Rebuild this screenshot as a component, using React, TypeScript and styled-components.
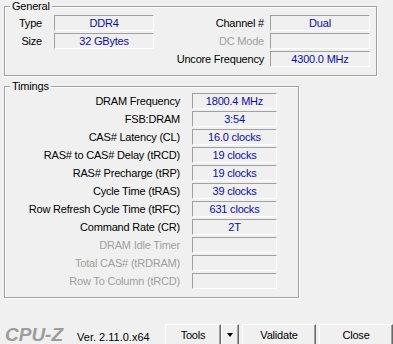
import React from 'react';
import styled, { createGlobalStyle } from 'styled-components';

type Row = { label: string; value?: string; disabled?: boolean };

const GENERAL: [Row | null, Row][] = [
  [{ label: 'Type', value: 'DDR4' }, { label: 'Channel #', value: 'Dual' }],
  [{ label: 'Size', value: '32 GBytes' }, { label: 'DC Mode', disabled: true }],
  [null, { label: 'Uncore Frequency', value: '4300.0 MHz' }],
];

const TIMINGS: Row[] = [
  { label: 'DRAM Frequency', value: '1800.4 MHz' },
  { label: 'FSB:DRAM', value: '3:54' },
  { label: 'CAS# Latency (CL)', value: '16.0 clocks' },
  { label: 'RAS# to CAS# Delay (tRCD)', value: '19 clocks' },
  { label: 'RAS# Precharge (tRP)', value: '19 clocks' },
  { label: 'Cycle Time (tRAS)', value: '39 clocks' },
  { label: 'Row Refresh Cycle Time (tRFC)', value: '631 clocks' },
  { label: 'Command Rate (CR)', value: '2T' },
  { label: 'DRAM Idle Timer', disabled: true },
  { label: 'Total CAS# (tRDRAM)', disabled: true },
  { label: 'Row To Column (tRCD)', disabled: true },
];

const App = (): JSX.Element => {
  return (
    <>
      <GlobalStyle />
      <Window>
        <Group $width={373} $top={6}>
          <Caption>General</Caption>
          <GeneralGrid>
            {GENERAL.map(([left, right], i) => (
              <React.Fragment key={i}>
                {left ? (
                  <>
                    <Label $gap={12}>{left.label}</Label>
                    <Field>{left.value}</Field>
                  </>
                ) : (
                  <>
                    <span />
                    <span />
                  </>
                )}
                <Label $gap={6} $disabled={right.disabled}>
                  {right.label}
                </Label>
                <Field>{right.value}</Field>
              </React.Fragment>
            ))}
          </GeneralGrid>
        </Group>

        <Group $width={295} $top={10}>
          <Caption>Timings</Caption>
          <TimingsGrid>
            {TIMINGS.map((row) => (
              <React.Fragment key={row.label}>
                <Label $gap={12} $disabled={row.disabled}>
                  {row.label}
                </Label>
                <Field>{row.value}</Field>
              </React.Fragment>
            ))}
          </TimingsGrid>
        </Group>

        <Footer>
          <Brand>
            <Logo>CPU-Z</Logo>
            <Version>Ver. 2.11.0.x64</Version>
          </Brand>
          <Buttons>
            <SplitButton>
              <Button $width={56}>Tools</Button>
              <Button $width={18}>
                <Arrow />
              </Button>
            </SplitButton>
            <Button $width={74}>Validate</Button>
            <Button $width={74}>Close</Button>
          </Buttons>
        </Footer>
      </Window>
    </>
  );
};

export default App;

const GlobalStyle = createGlobalStyle`
  html, body {
    margin: 0;
    padding: 0;
    background: #f0f0f0;
  }
  body {
    font-family: "Liberation Sans", Arial, sans-serif;
    font-size: 11px;
    letter-spacing: -0.2px;
    color: #000;
  }
`;

const Window = styled.div`
  width: 393px;
  height: 344px;
  overflow: hidden;
  box-sizing: border-box;
  padding-left: 4px;
  display: flex;
  flex-direction: column;
  background: #f0f0f0;
`;

const Group = styled.section<{ $width: number; $top: number }>`
  position: relative;
  flex: none;
  width: ${({ $width }) => $width}px;
  margin-top: ${({ $top }) => $top}px;
  box-sizing: border-box;
  border: 1px solid #a0a0a0;
  box-shadow: inset 1px 1px 0 #fff, 1px 1px 0 #fff;
`;

const Caption = styled.span`
  position: absolute;
  top: -7px;
  left: 5px;
  padding: 0 2px;
  line-height: 13px;
  background: #f0f0f0;
`;

const GeneralGrid = styled.div`
  display: grid;
  grid-template-columns: 49px 100px 116px 100px;
  grid-auto-rows: 16px;
  row-gap: 2px;
  padding: 8px 0 8px;
`;

const TimingsGrid = styled.div`
  display: grid;
  grid-template-columns: 187px 85px;
  grid-auto-rows: 16px;
  row-gap: 2px;
  padding: 6px 0 8px;
`;

const Label = styled.span<{ $gap: number; $disabled?: boolean }>`
  padding-right: ${({ $gap }) => $gap}px;
  line-height: 16px;
  text-align: right;
  white-space: nowrap;
  color: ${({ $disabled }) => ($disabled ? '#a0a0a0' : '#000')};
`;

const Field = styled.span`
  box-sizing: border-box;
  height: 16px;
  border-top: 1px solid #a0a0a0;
  border-left: 1px solid #a0a0a0;
  border-right: 1px solid #fff;
  border-bottom: 1px solid #fff;
  line-height: 14px;
  text-align: center;
  color: #0c0ca8;
  white-space: nowrap;
`;

const Footer = styled.div`
  display: flex;
  align-items: flex-start;
  margin-top: 26px;
`;

const Brand = styled.div`
  display: flex;
  align-items: baseline;
  margin: 3px 0 0 1px;
`;

const Logo = styled.span`
  font-size: 19px;
  line-height: 16px;
  font-weight: 700;
  font-style: italic;
  letter-spacing: 0;
  color: #9c9c9c;
  margin-right: 14px;
`;

const Version = styled.span`
  font-size: 11px;
  line-height: 13px;
  letter-spacing: 0;
`;

const Buttons = styled.div`
  display: flex;
  gap: 3px;
  margin-left: auto;
`;

const SplitButton = styled.div`
  display: flex;
`;

const Button = styled.div<{ $width: number }>`
  width: ${({ $width }) => $width}px;
  height: 23px;
  box-sizing: border-box;
  display: flex;
  align-items: center;
  justify-content: center;
  background: #f0f0f0;
  border-top: 1px solid #fff;
  border-left: 1px solid #fff;
  border-right: 1px solid #696969;
  border-bottom: 1px solid #696969;
  box-shadow: inset -1px -1px 0 #a0a0a0;
  line-height: 21px;
`;

const Arrow = styled.span`
  width: 0;
  height: 0;
  border-left: 3.5px solid transparent;
  border-right: 3.5px solid transparent;
  border-top: 4px solid #000;
  margin-top: -2px;
`;
